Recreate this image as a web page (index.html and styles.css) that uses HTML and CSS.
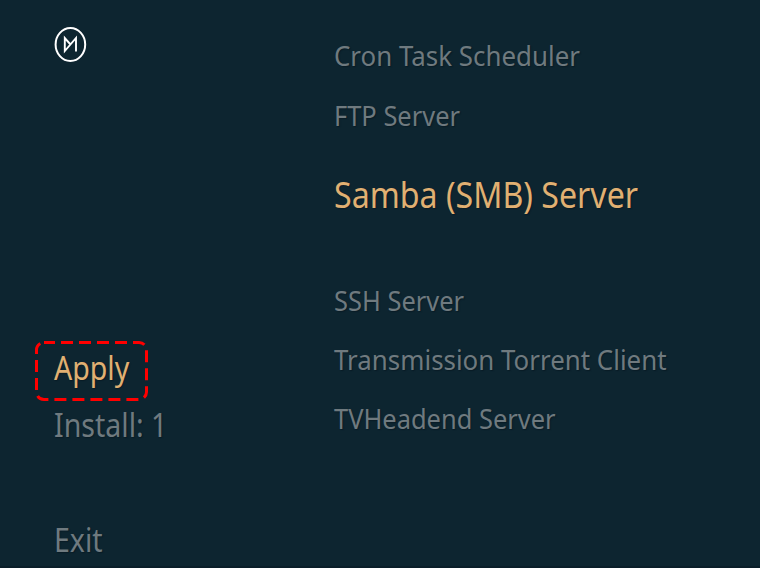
FILE: index.html
```html
<!DOCTYPE html>
<html lang="en">
<head>
<meta charset="utf-8">
<title>Servers</title>
<link rel="stylesheet" href="styles.css">
</head>
<body>
<main class="screen">
<aside class="side">
<svg class="logo" width="34" height="36" viewBox="0 0 34 36" fill="none" stroke="#fff"><ellipse cx="16.400" cy="17.500" rx="14.800" ry="16.500" stroke-width="2"/><path d="M22 24.500V11L10.800 24V11L16.500 17.500" stroke-width="1.900"/></svg>
<nav class="actions">
<div class="action active"><span>Apply</span><svg class="focus" width="113" height="60"><rect x="1.500" y="1.500" width="110" height="57" rx="7.500"/></svg></div>
<div class="action install"><span>Install: 1</span></div>
<div class="action"><span>Exit</span></div>
</nav>
</aside>
<section class="list">
<div class="item"><span class="wide">Cron Task Scheduler</span></div>
<div class="item"><span>FTP Server</span></div>
<div class="item selected"><span>Samba (SMB) Server</span></div>
<div class="item"><span>SSH Server</span></div>
<div class="item"><span class="wide">Transmission Torrent Client</span></div>
<div class="item"><span>TVHeadend Server</span></div>
</section>
</main>
</body>
</html>
```
FILE: styles.css
```css
* { box-sizing: border-box; }
body { margin: 0; background: #0d2530; font-family: "Noto Sans", sans-serif; }
.screen { display: grid; grid-template-columns: 280px 1fr; width: 760px; height: 568px; padding-left: 54px; overflow: hidden; white-space: nowrap; color: #6f7a7f; text-shadow: 1px 1px 1px #091c26; border-bottom: 2px solid #0a1e29; }
.side { padding-top: 27px; }
.logo { display: block; }
.actions { margin-top: 276px; font-size: 33px; }
.action { position: relative; height: 57px; line-height: 57px; }
.action span { display: inline-block; transform: scaleX(.865); transform-origin: left; }
.install { margin-bottom: 58px; }
.active { color: #e0b072; }
.focus { position: absolute; left: -19px; top: 2px; fill: none; stroke: #f00; stroke-width: 3; stroke-dasharray: 12 6; stroke-dashoffset: 1; }
.list { padding-top: 25px; font-size: 28px; }
.item { height: 59px; line-height: 60px; }
.item:first-child { height: 60px; }
.item span { display: inline-block; transform: scaleX(.909); transform-origin: left; }
.item .wide { transform: scaleX(.925); }
.item.selected { height: 126px; padding-top: 20px; font-size: 37px; color: #e0b072; }
.selected span { transform: scaleX(.869); }
```
